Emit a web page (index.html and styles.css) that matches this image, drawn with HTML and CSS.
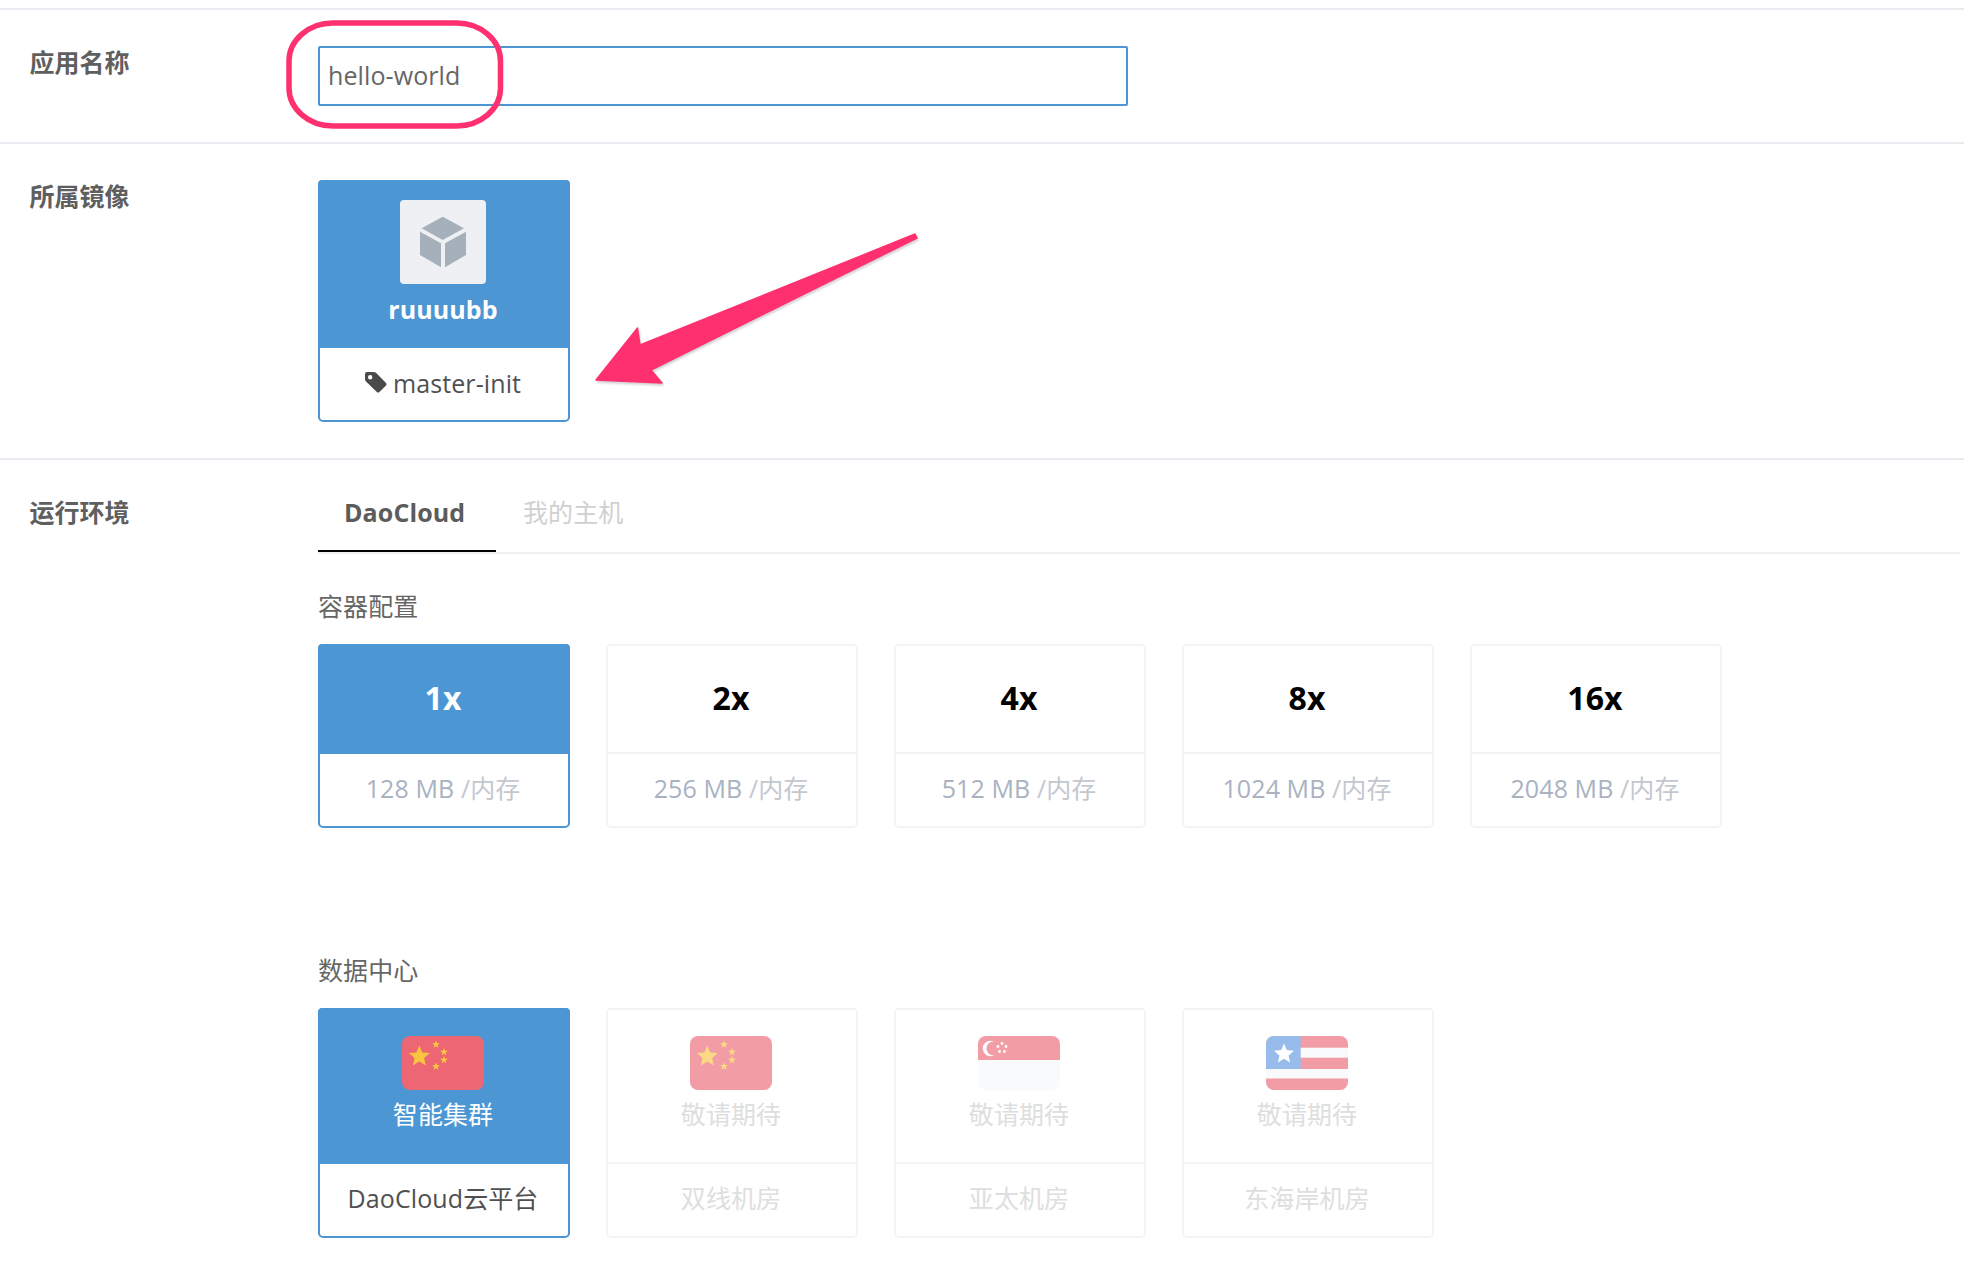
FILE: index.html
```html
<!DOCTYPE html>
<html lang="zh-CN">
<head>
  <meta charset="UTF-8">
  <title>创建应用</title>
  <link rel="stylesheet" href="styles.css">
</head>
<body>
  <svg class="defs" width="0" height="0">
    <defs>
      <polygon id="star" points="0,-1 .27,-.372 .951,-.309 .437,.142 .588,.809 0,.46 -.588,.809 -.437,.142 -.951,-.309 -.27,-.372"/>
      <clipPath id="flagClip"><rect width="82" height="54" rx="8"/></clipPath>
    </defs>
  </svg>

  <main class="form">
    <section class="row">
      <div class="row-label">应用名称</div>
      <div class="row-body">
        <input class="name-input" value="hello-world">
      </div>
    </section>

    <section class="row">
      <div class="row-label">所属镜像</div>
      <div class="row-body">
        <div class="card card-image is-active">
          <div class="card-head">
            <div class="image-icon">
              <svg width="86" height="84" viewBox="0 0 86 84">
                <polygon points="42.7,16.7 64,28.3 42.7,40 21.7,28.3" fill="#a5b0ba"/>
                <polygon points="20,31.7 41,43.3 41,67.3 20,55" fill="#a5b0ba"/>
                <polygon points="66,31.7 45,43.3 45,67.3 66,55" fill="#a5b0ba"/>
              </svg>
            </div>
            <div class="image-name">ruuuubb</div>
          </div>
          <div class="card-foot foot-dark">
            <svg class="tag-icon" width="22" height="21" viewBox="0 0 22 21">
              <path fill="#4a4a4a" fill-rule="evenodd" d="M2 0h6.5q1.6 0 2.7 1.1l9.8 9.8q1 1.3 0 2.5l-6.6 6.7q-1.3 1-2.5 0L1 9.6Q0 8.6 0 7V2q0-2 2-2zM5.2 3a2.2 2.2 0 1 0 0 4.4 2.2 2.2 0 0 0 0-4.4z"/>
            </svg>
            <span>master-init</span>
          </div>
        </div>
      </div>
    </section>

    <section class="row row-last">
      <div class="row-label">运行环境</div>
      <div class="row-body">
        <div class="tabs">
          <div class="tab is-current">DaoCloud</div>
          <div class="tab">我的主机</div>
        </div>

        <div class="sub-title">容器配置</div>
        <div class="card-list">
          <div class="card card-size is-active">
            <div class="card-head size-num">1x</div>
            <div class="card-foot"><span>128 MB <span class="unit">/内存</span></span></div>
          </div>
          <div class="card card-size">
            <div class="card-head size-num">2x</div>
            <div class="card-foot"><span>256 MB <span class="unit">/内存</span></span></div>
          </div>
          <div class="card card-size">
            <div class="card-head size-num">4x</div>
            <div class="card-foot"><span>512 MB <span class="unit">/内存</span></span></div>
          </div>
          <div class="card card-size">
            <div class="card-head size-num">8x</div>
            <div class="card-foot"><span>1024 MB <span class="unit">/内存</span></span></div>
          </div>
          <div class="card card-size">
            <div class="card-head size-num">16x</div>
            <div class="card-foot"><span>2048 MB <span class="unit">/内存</span></span></div>
          </div>
        </div>

        <div class="sub-title sub-title-second">数据中心</div>
        <div class="card-list">
          <div class="card card-dc is-active">
            <div class="card-head">
              <svg class="flag" width="82" height="54" viewBox="0 0 82 54">
                <g clip-path="url(#flagClip)">
                  <rect width="82" height="54" fill="#ec6674"/>
                  <g fill="#f9c43f">
                    <use href="#star" transform="translate(17.3 20.5) scale(11)"/>
                    <use href="#star" transform="translate(34 8.5) scale(4)"/>
                    <use href="#star" transform="translate(42 16) scale(4)"/>
                    <use href="#star" transform="translate(42 24) scale(4)"/>
                    <use href="#star" transform="translate(34 30.5) scale(4)"/>
                  </g>
                </g>
              </svg>
              <div class="dc-status">智能集群</div>
            </div>
            <div class="card-foot foot-dark">DaoCloud云平台</div>
          </div>

          <div class="card card-dc is-off">
            <div class="card-head">
              <svg class="flag" width="82" height="54" viewBox="0 0 82 54">
                <g clip-path="url(#flagClip)">
                  <rect width="82" height="54" fill="#ec6674"/>
                  <g fill="#f9c43f">
                    <use href="#star" transform="translate(17.3 20.5) scale(11)"/>
                    <use href="#star" transform="translate(34 8.5) scale(4)"/>
                    <use href="#star" transform="translate(42 16) scale(4)"/>
                    <use href="#star" transform="translate(42 24) scale(4)"/>
                    <use href="#star" transform="translate(34 30.5) scale(4)"/>
                  </g>
                </g>
              </svg>
              <div class="dc-status">敬请期待</div>
            </div>
            <div class="card-foot">双线机房</div>
          </div>

          <div class="card card-dc is-off">
            <div class="card-head">
              <svg class="flag" width="82" height="54" viewBox="0 0 82 54">
                <g clip-path="url(#flagClip)">
                  <rect width="82" height="54" fill="#f6f8fb"/>
                  <rect width="82" height="24" fill="#ec6674"/>
                  <circle cx="12.5" cy="12.5" r="7.8" fill="#fff"/>
                  <circle cx="15.5" cy="12.5" r="7" fill="#ec6674"/>
                  <g fill="#fff">
                    <circle cx="24" cy="7.5" r="1.4"/>
                    <circle cx="28" cy="10.5" r="1.4"/>
                    <circle cx="26.5" cy="15.5" r="1.4"/>
                    <circle cx="21.5" cy="15.5" r="1.4"/>
                    <circle cx="20" cy="10.5" r="1.4"/>
                  </g>
                </g>
              </svg>
              <div class="dc-status">敬请期待</div>
            </div>
            <div class="card-foot">亚太机房</div>
          </div>

          <div class="card card-dc is-off">
            <div class="card-head">
              <svg class="flag" width="82" height="54" viewBox="0 0 82 54">
                <g clip-path="url(#flagClip)">
                  <rect width="82" height="54" fill="#f6f8fb"/>
                  <rect width="82" height="11.7" fill="#ec6674"/>
                  <rect y="21.7" width="82" height="11.3" fill="#ec6674"/>
                  <rect y="42.5" width="82" height="11.5" fill="#ec6674"/>
                  <rect width="34.7" height="33" fill="#5e96e1"/>
                  <use href="#star" fill="#fff" transform="translate(18 18) scale(10.5)"/>
                </g>
              </svg>
              <div class="dc-status">敬请期待</div>
            </div>
            <div class="card-foot">东海岸机房</div>
          </div>
        </div>
      </div>
    </section>
  </main>

  <!-- hand drawn markup from the screenshot tool -->
  <svg class="markup" width="1964" height="1270" viewBox="0 0 1964 1270">
    <rect x="289" y="23" width="211.5" height="103" rx="44" ry="38" fill="none" stroke="#ff3070" stroke-width="5.5"/>
    <polygon class="arrow" points="915,234 640,345 637.5,328 596,380 662,383 651,370 917,238" fill="#ff3070" stroke="#ff3070" stroke-width="1.5" stroke-linejoin="round"/>
  </svg>
</body>
</html>
```

FILE: styles.css
```css
* { box-sizing: border-box; }
body { margin: 0; background: #fff; color: #5c5c5c; font-family: "Open Sans", "Noto Sans CJK SC", sans-serif; font-size: 25px; line-height: 32px; letter-spacing: .1px; overflow: hidden; }

.defs { position: absolute; }

.form { margin-top: 8px; border-top: 2px solid #e8ecf0; }
.row { display: grid; grid-template-columns: 318px 1fr; padding: 36px 0; border-bottom: 2px solid #e8ecf0; }
.row-last { border-bottom: none; padding-bottom: 0; }
.row-label { padding-left: 29.5px; font-weight: 700; color: #5f5f5f; letter-spacing: 0; }
.row-body { min-width: 0; padding-right: 4px; }

.name-input { display: block; width: 810px; height: 60px; padding: 0 8px 2px; border: 2px solid #4c96d3; border-radius: 2px; font: inherit; letter-spacing: .1px; color: #666; outline: none; }

.tabs { display: flex; height: 58px; border-bottom: 2px solid #eef0f3; }
.tab { height: 56px; padding: 0 27px; color: #d0d0d0; }
.tab.is-current { width: 178px; padding: 0 26px; border-bottom: 2px solid #000; color: #5c5c5c; font-weight: 700; }

.sub-title { margin: 36px 0 22px; color: #666; }
.sub-title-second { margin-top: 126px; margin-bottom: 22px; }

.card-list { display: flex; gap: 36px; }
.card { display: flex; flex-direction: column; width: 252px; border: 2px solid #f3f4f6; border-radius: 5px; background: #fff; text-align: center; }
.card-head { flex: none; padding-right: 2px; border-bottom: 2px solid #f3f4f6; }
.card-foot { display: flex; flex: 1; align-items: center; justify-content: center; padding: 0 2px 4px 0; color: #a9b2c1; }
.foot-dark { color: #505050; }
.unit { color: #c3c8d0; }

.card.is-active { border-color: #4c96d3; }
.card.is-active .card-head { margin: -2px -2px 0; border-bottom: none; border-radius: 4px 4px 0 0; background: #4c96d3; color: #fff; }

.card-image { height: 242px; }
.card-image .card-head { display: flex; flex-direction: column; align-items: center; height: 168px; padding-top: 20px; }
.card-image .card-foot { padding-bottom: 3px; }
.image-icon { width: 86px; height: 84px; border-radius: 4px; background: #eef0f4; }
.image-icon svg { display: block; }
.image-name { margin-top: 9px; font-weight: 700; }
.tag-icon { margin-right: 6px; }

.card-size { height: 184px; }
.size-num { display: flex; align-items: center; justify-content: center; height: 108px; padding-bottom: 3px; color: #000; font-size: 32px; font-weight: 700; }
.card-size.is-active .size-num { height: 110px; }

.card-dc { height: 230px; }
.card-dc .card-head { display: flex; flex-direction: column; align-items: center; height: 154px; padding-top: 26px; }
.card-dc.is-active .card-head { height: 156px; padding-top: 28px; }
.flag { display: block; }
.dc-status { margin-top: 8px; }
.card-dc.is-off { color: #dedede; }
.card-dc.is-off .card-foot { color: #dedede; }
.card-dc.is-off .flag { opacity: .64; }

.markup { position: absolute; top: 0; left: 0; pointer-events: none; }
.arrow { filter: drop-shadow(1px 2px 1px rgba(0, 0, 0, .18)); }
```
